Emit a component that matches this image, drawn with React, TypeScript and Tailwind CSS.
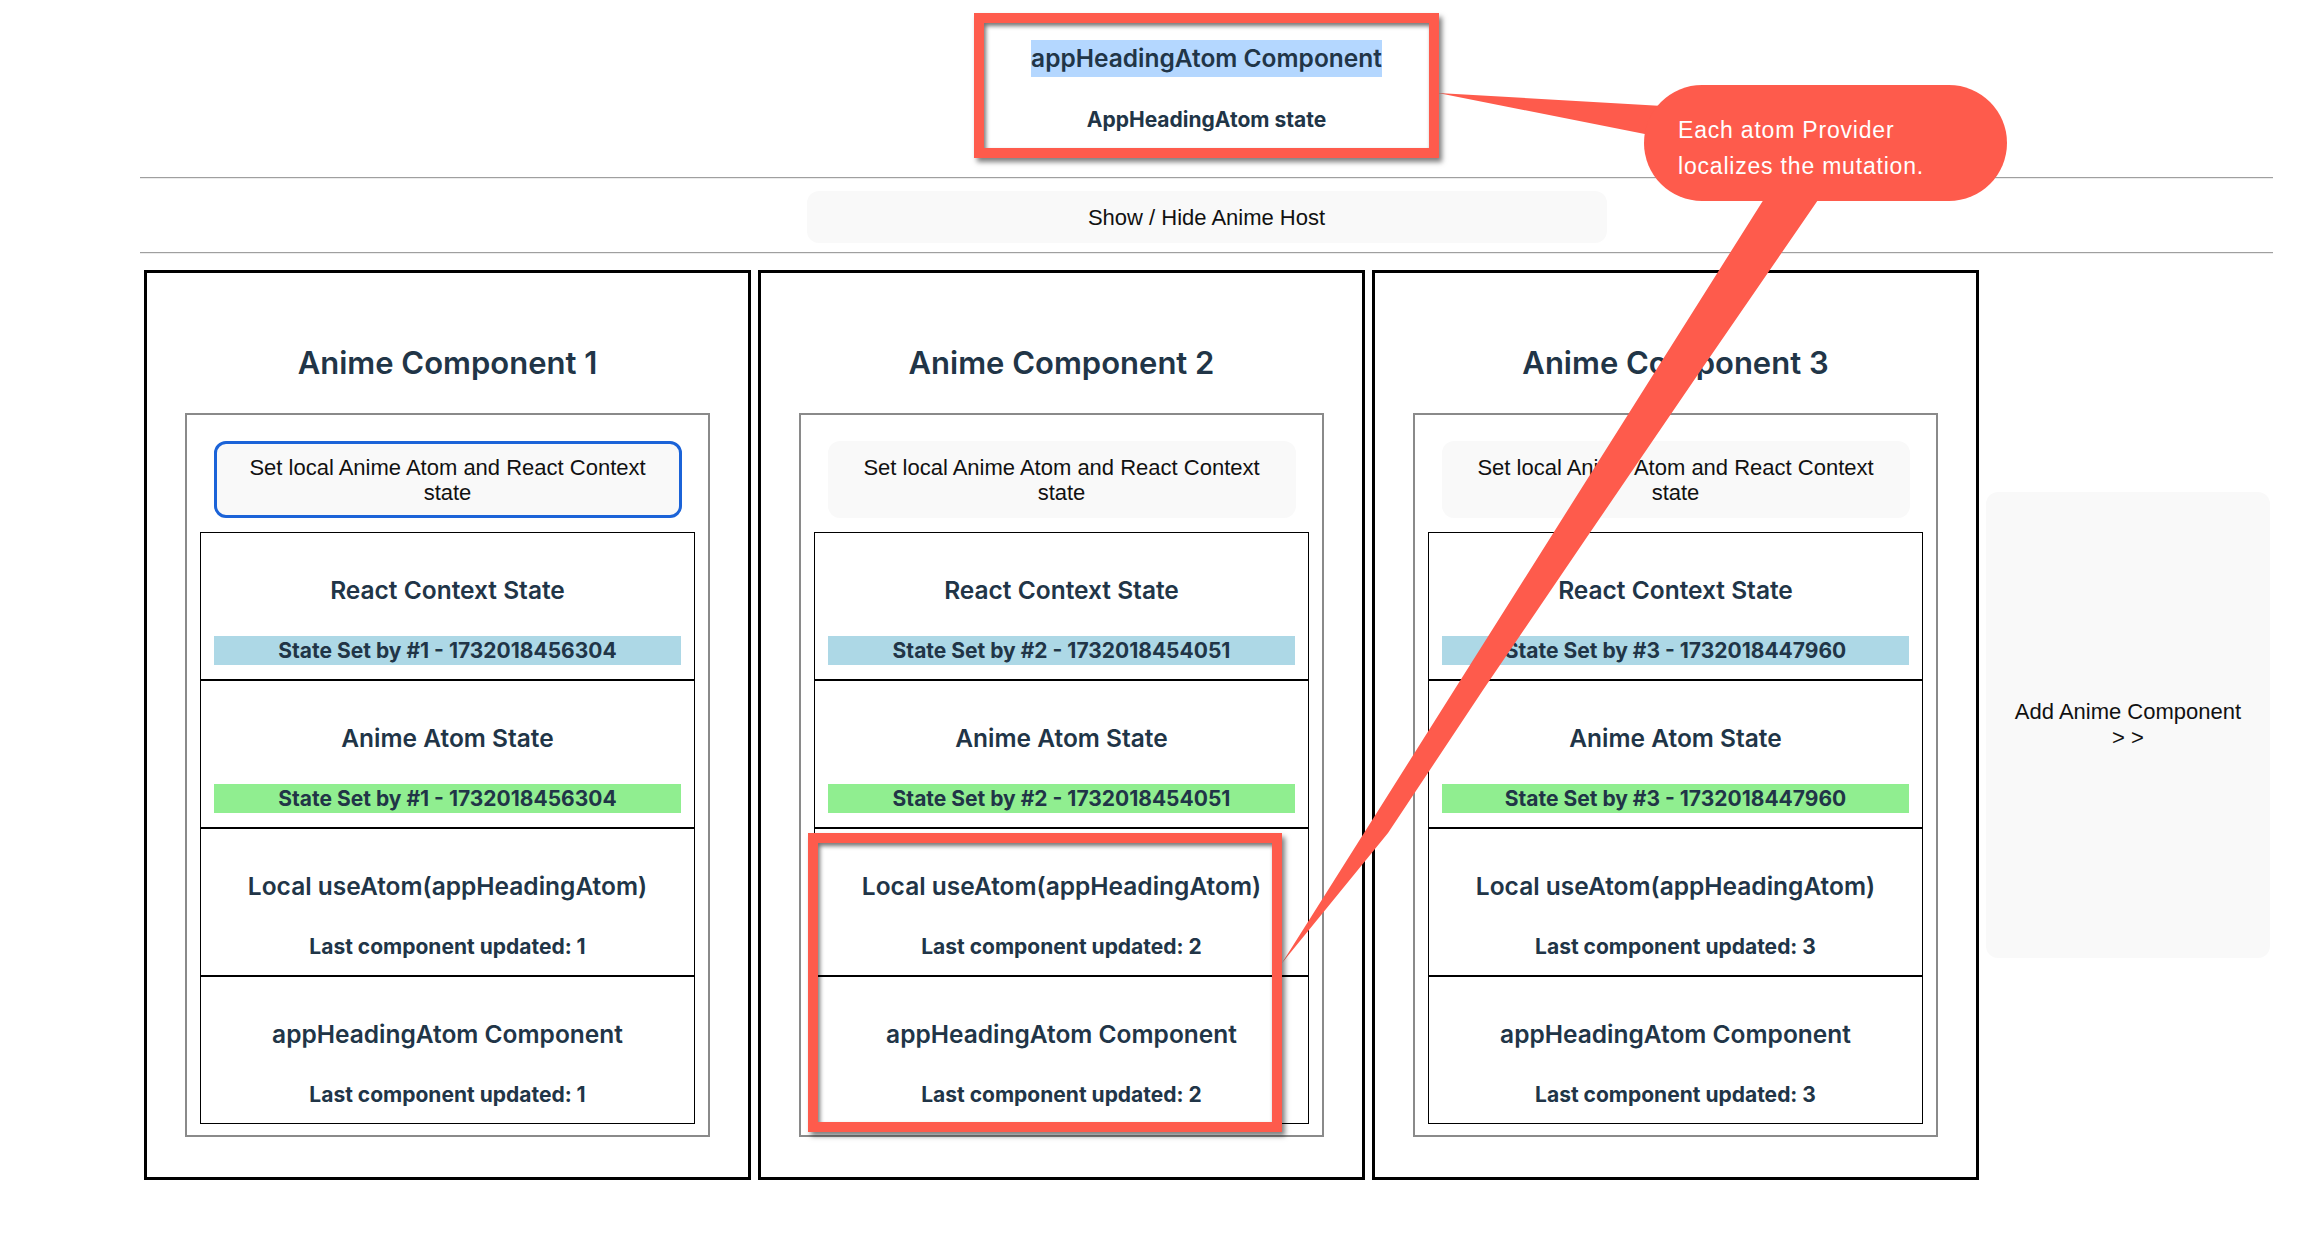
import React from "react";

const ink = "text-[#213547] font-['Inter',sans-serif]";
const sysFont = "font-['Liberation_Sans',Arial,sans-serif]";

interface AnimeComp {
  id: number;
  stamp: string;
  focused?: boolean;
}

const comps: AnimeComp[] = [
  { id: 1, stamp: "1732018456304", focused: true },
  { id: 2, stamp: "1732018454051" },
  { id: 3, stamp: "1732018447960" },
];

function StateBox({ title, value, bg }: { title: string; value: string; bg?: string }) {
  return (
    <div className="h-[148px] border border-black px-[13px] flex flex-col items-center">
      <h3 className={`${ink} font-semibold mt-[43px] text-[24.5px] leading-[29px]`}>{title}</h3>
      <p className={`${ink} font-bold mt-[31px] w-full text-center text-[21px] leading-[29px] ${bg ?? ""}`}>{value}</p>
    </div>
  );
}

function AnimePanel({ comp }: { comp: AnimeComp }) {
  const by = `State Set by #${comp.id} - ${comp.stamp}`;
  return (
    <div className="w-[607px] shrink-0 border-[3px] border-black flex flex-col items-center">
      <h2 className={`${ink} font-semibold mt-[70px] text-[31px] leading-[39px]`}>Anime Component {comp.id}</h2>
      <div className="mt-[31px] mb-[40px] w-[525px] border-2 border-[#8a8a8a] pt-[26px] pb-[11px] flex flex-col items-center">
        <button
          className={`${sysFont} w-[468px] h-[77px] rounded-[12px] bg-[#f9f9f9] text-[22px] leading-[25px] text-[#111] px-[26px] border-[3px] ${
            comp.focused ? "border-[#1b63d8]" : "border-transparent"
          }`}
        >
          Set local Anime Atom and React Context state
        </button>
        <div className="mt-[14px] w-[495px] flex flex-col">
          <StateBox title="React Context State" value={by} bg="bg-[#add8e6]" />
          <StateBox title="Anime Atom State" value={by} bg="bg-[#90ee90]" />
          <StateBox title="Local useAtom(appHeadingAtom)" value={`Last component updated: ${comp.id}`} />
          <StateBox title="appHeadingAtom Component" value={`Last component updated: ${comp.id}`} />
        </div>
      </div>
    </div>
  );
}

export default function App() {
  return (
    <div className="relative w-[2304px] h-[1236px] bg-white overflow-hidden">
      <div className="ml-[140px] w-[2133px]">
        {/* App heading */}
        <div className="h-[177px] flex flex-col items-center">
          <h2 className={`${ink} font-semibold mt-[40px] inline-block bg-[#b4d7ff] text-[24.5px] leading-[37px]`}>
            appHeadingAtom Component
          </h2>
          <p className={`${ink} font-bold mt-[28px] text-[21px] leading-[29px]`}>AppHeadingAtom state</p>
        </div>
        <hr className="border-t border-b border-t-[#9f9f9f] border-b-[#ececec]" />
        <button
          className={`${sysFont} block mx-auto mt-[12px] w-[800px] h-[52px] rounded-[12px] bg-[#f9f9f9] text-[22px] text-[#111]`}
        >
          Show / Hide Anime Host
        </button>
        <hr className="mt-[9px] border-t border-b border-t-[#9f9f9f] border-b-[#ececec]" />

        {/* Anime host */}
        <div className="mt-[16px] pl-[4px] flex items-center gap-[7px]">
          {comps.map((c) => (
            <AnimePanel key={c.id} comp={c} />
          ))}
          <button
            className={`${sysFont} w-[284px] h-[466px] shrink-0 rounded-[12px] bg-[#f9f9f9] text-[22px] leading-[26px] text-[#111]`}
          >
            Add Anime Component
            <br />
            &gt; &gt;
          </button>
        </div>
      </div>

      {/* Annotation layer */}
      <svg className="absolute left-0 top-0 pointer-events-none" width="2304" height="1236" viewBox="0 0 2304 1236">
        <polygon points="1438,93 1680,107 1680,141" fill="#fe5b4c" />
        <polygon
          points="1776,180 1832,180 1818,200 1701,370 1587,537 1483,690 1388,833 1282,963"
          fill="#fe5b4c"
        />
      </svg>
      <div className="absolute left-[974px] top-[13px] w-[465px] h-[145px] border-[10px] border-[#fe5b4c] shadow-[3px_4px_5px_rgba(0,0,0,0.5),inset_2px_3px_4px_rgba(0,0,0,0.55)] pointer-events-none" />
      <div className="absolute left-[808px] top-[833px] w-[474px] h-[299px] border-[10px] border-[#fe5b4c] shadow-[3px_4px_5px_rgba(0,0,0,0.5),inset_2px_3px_4px_rgba(0,0,0,0.55)] pointer-events-none" />
      <div
        className={`${sysFont} absolute left-[1644px] top-[85px] w-[363px] h-[116px] rounded-[58px] bg-[#fe5b4c] pl-[34px] pt-[27px] text-[23px] leading-[36px] tracking-[0.8px] text-white`}
      >
        Each atom Provider
        <br />
        localizes the mutation.
      </div>
    </div>
  );
}
